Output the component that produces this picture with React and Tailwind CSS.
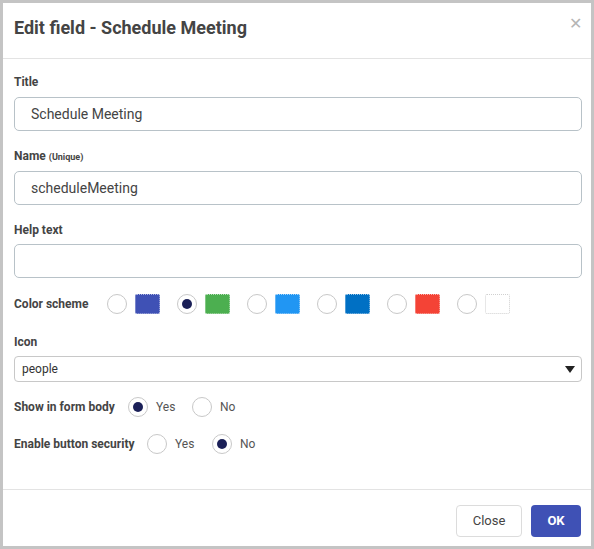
import React from "react";

function Radio({ checked }) {
  return (
    <span className="w-[20px] h-[20px] rounded-full border border-[#c8c8c8] bg-white flex items-center justify-center shrink-0">
      {checked && <span className="w-[10px] h-[10px] rounded-full bg-[#1b2058]" />}
    </span>
  );
}

function Swatch({ color, checked }) {
  return (
    <div className="flex items-center gap-[8px] w-[70px]">
      <Radio checked={checked} />
      <span
        className={`w-[25px] h-[20px] rounded-[2px] border border-dotted ${color === "white" ? "border-[#d0d0d0] bg-white" : "border-white/60"}`}
        style={color === "white" ? {} : { backgroundColor: color }}
      />
    </div>
  );
}

export default function App() {
  const font = { fontFamily: "Roboto, 'Liberation Sans', sans-serif" };
  return (
    <div style={font} className="w-[594px] h-[549px] border-[3px] border-[#c4c4c4] bg-white flex flex-col text-[#444]">
      <div className="h-[56px] shrink-0 flex items-center justify-between pl-[11px] pr-[9px] pb-[6px] border-b border-[#e3e3e3]">
        <h1 className="text-[18px] font-bold text-[#444]">Edit field - Schedule Meeting</h1>
        <span className="text-[#b5b5b5] text-[16px] leading-none -mt-[8px]">✕</span>
      </div>
      <div className="flex-1 pl-[11px] pr-[9px] pt-[15px]">
        <div className="text-[12px] font-bold leading-[16px]">Title</div>
        <div className="mt-[7px] h-[34px] rounded-[5px] border border-[#b8c2c8] flex items-center pl-[16px] text-[14px] text-[#444]">Schedule Meeting</div>
        <div className="mt-[17px] text-[12px] font-bold leading-[16px]">Name <span className="text-[9px]">(Unique)</span></div>
        <div className="mt-[6px] h-[34px] rounded-[5px] border border-[#b8c2c8] flex items-center pl-[16px] text-[14px] text-[#444]">scheduleMeeting</div>
        <div className="mt-[17px] text-[12px] font-bold leading-[16px]">Help text</div>
        <div className="mt-[6px] h-[34px] rounded-[5px] border border-[#b8c2c8]" />
        <div className="mt-[16px] h-[20px] flex items-center">
          <span className="w-[93px] text-[12px] font-bold">Color scheme</span>
          <Swatch color="#3f51b5" />
          <Swatch color="#4caf50" checked />
          <Swatch color="#2196f3" />
          <Swatch color="#0070c4" />
          <Swatch color="#f44336" />
          <Swatch color="white" />
        </div>
        <div className="mt-[20px] text-[12px] font-bold leading-[16px]">Icon</div>
        <div className="mt-[6px] h-[26px] rounded-[4px] border border-[#c8c8c8] flex items-center justify-between pl-[7px] pr-[6px] text-[12px] text-[#333]">
          <span>people</span>
          <span className="w-0 h-0 border-l-[5px] border-r-[5px] border-t-[7px] border-l-transparent border-r-transparent border-t-[#222]" />
        </div>
        <div className="mt-[15px] h-[20px] flex items-center text-[12px]">
          <span className="w-[114px] font-bold">Show in form body</span>
          <Radio checked />
          <span className="ml-[8px] w-[36px] text-[#555]">Yes</span>
          <Radio />
          <span className="ml-[8px] text-[#555]">No</span>
        </div>
        <div className="mt-[17px] h-[20px] flex items-center text-[12px]">
          <span className="w-[133px] font-bold">Enable button security</span>
          <Radio />
          <span className="ml-[8px] w-[37px] text-[#555]">Yes</span>
          <Radio checked />
          <span className="ml-[8px] text-[#555]">No</span>
        </div>
      </div>
      <div className="h-[57px] shrink-0 border-t border-[#e3e3e3] flex items-start justify-end gap-[9px] pt-[15px] pr-[10px]">
        <button className="h-[32px] w-[66px] rounded-[4px] border border-[#dcdcdc] bg-white text-[13px] text-[#444]">Close</button>
        <button className="h-[32px] w-[50px] rounded-[4px] bg-[#3f51b5] text-[13px] font-bold text-white">OK</button>
      </div>
    </div>
  );
}
